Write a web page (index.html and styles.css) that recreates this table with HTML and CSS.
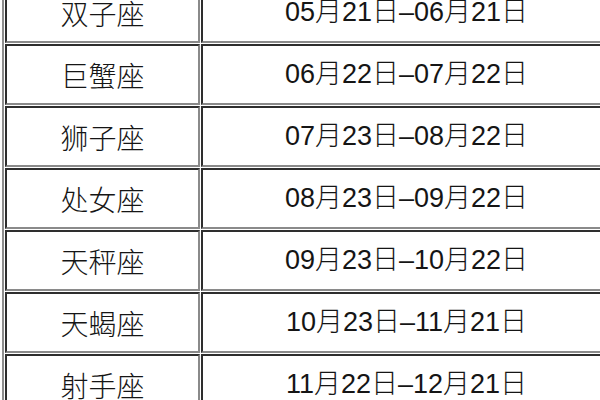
FILE: index.html
```html
<!DOCTYPE html>
<html lang="zh-CN">
<head>
<meta charset="utf-8">
<title>星座日期表</title>
<link rel="stylesheet" href="styles.css">
</head>
<body>
<table class="zodiac">
  <colgroup><col class="c-sign"><col class="c-date"></colgroup>
  <tbody>
    <tr><td class="sign">双子座</td><td class="date">05月21日–06月21日</td></tr>
    <tr><td class="sign">巨蟹座</td><td class="date">06月22日–07月22日</td></tr>
    <tr><td class="sign">狮子座</td><td class="date">07月23日–08月22日</td></tr>
    <tr><td class="sign">处女座</td><td class="date">08月23日–09月22日</td></tr>
    <tr><td class="sign">天秤座</td><td class="date">09月23日–10月22日</td></tr>
    <tr><td class="sign">天蝎座</td><td class="date">10月23日–11月21日</td></tr>
    <tr><td class="sign">射手座</td><td class="date">11月22日–12月21日</td></tr>
  </tbody>
</table>
</body>
</html>
```

FILE: styles.css
```css
html, body {
  margin: 0;
  padding: 0;
  background: #ffffff;
  overflow: hidden;
}

.zodiac {
  margin: -21px 0 0 2px;
  border-collapse: separate;
  border-spacing: 1px;
  border-left: 2px solid #8e8e8e;
  border-top: 2px solid #8e8e8e;
  border-right: 2px solid #333;
  border-bottom: 2px solid #333;
  table-layout: fixed;
  width: 613px;
  font-family: "Liberation Sans", "Noto Sans CJK SC", sans-serif;
  font-size: 27px;
  color: #151515;
}

.c-sign { width: 195px; }
.c-date { width: 411px; }

.zodiac td {
  height: 61px;
  box-sizing: border-box;
  padding: 0;
  text-align: center;
  vertical-align: middle;
  line-height: 1;
  border-top: 2px solid #2e2e2e;
  border-left: 2px solid #2e2e2e;
  border-right: 2px solid #8a8a8a;
  border-bottom: 2px solid #8a8a8a;
  white-space: nowrap;
}

.date {
  font-weight: 300;
}

.sign {
  font-family: "Noto Sans CJK SC", sans-serif;
  font-weight: 300;
  font-size: 28px;
}
```
